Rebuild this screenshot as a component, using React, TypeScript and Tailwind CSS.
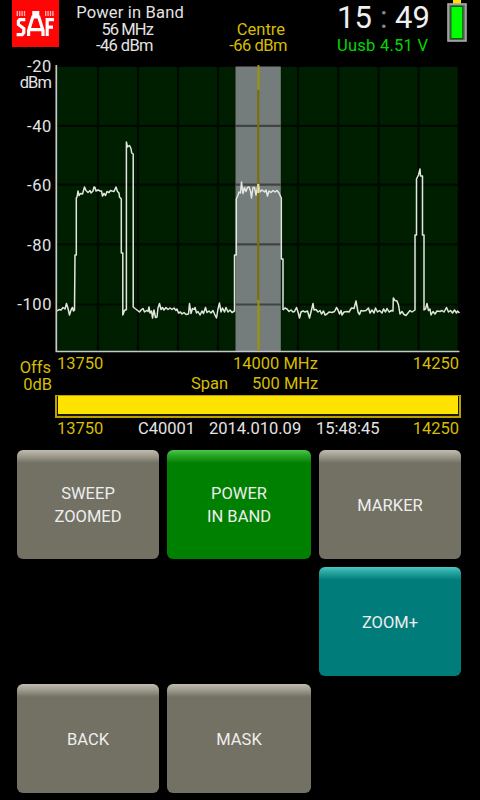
import clsx from "clsx";

const TRACE_LEFT =
  "57,311 59,309.5 61,310 63,307.5 65,309 66.5,303.5 68,308.5 69.5,315 71,310 72.5,307.5 73.5,311 74.5,310 75,255 76.3,255 76.3,198 77,197 78,191 79,195.5 80.5,193.5 82.5,194 84.5,187 86,190.5 88,192.5 90,190.5 91,193 93,191 94,187 95,187.5 96,191 98,190 100,191 101.5,191 102.5,196 104,193.5 105.5,195.5 107,191.5 109,192.5 110.5,190.5 112,191 114,191.5 116,187 117.5,191.5 119,193 119.5,197 121.3,199 121.3,253 122.8,253 122.8,315 124.5,310.5 126.4,309.5 126.4,142 127.5,147 129.5,145.5 131,148.5 131.7,153 133.2,154 133.2,307 135,308.5";

const TRACE_MIDDLE =
  "135,308.5 137,310 139.5,312 141.5,309.5 143,308.5 144.5,312 146.5,310.5 148,311.5 149,307 150,313 151.5,311 152.5,318 154,310 155.5,317.5 157,317 158,308 159.5,303.5 161,309.5 162.5,307.5 164,310 166,307.5 168,309.5 170,308 172,309.5 174,308 176,310.5 177,309 178.5,313 180.5,312 182,314 184,312.5 186,314.5 188.5,314 189.5,303.5 191,313.5 192.5,308.5 194,309.5 195,307.5 196.5,313 198,311.5 200,315 202,311 203.5,313.5 205.5,307.5 207,312.5 209,311 211,313 213,310.5 214.5,314 216.5,318 218,309 219.5,303 221,312 222.5,308 224.5,312 226,307.5 228,312 230,310 232,312.5 234.5,311 234.5,255 236.3,255 236.3,199 238,195 239,192 240.5,193 241.5,182 243,193.5 244.5,187.5 246,191.5 247.5,187.5 249,187 250.5,191 251.5,198 253,187.5 254.5,187.5 256,195 258.2,184 260,192 262,190 264.5,192 266,190 267.5,196 269,191 271,192.5 273,190.5 275,192 277,190.5 279,193 281.3,198 281.3,259 283,259 283,310";

const TRACE_RIGHT =
  "283,310 285,308 287,309 289,311.5 291,310 293,312 294.5,311.5 296.5,307.5 298,312 299.5,318 301,312 303,311 305,312 307.5,311 309.5,318 311.5,310 313,303.5 314,310 316,309.5 318,312 320,310.5 321.5,314 323.5,311 325,315 327,314 329,312 332,312.5 334.5,311.5 336.5,307.5 338,310 339.5,314 341,310.5 342,315 344,312 347,311.5 349,312 351.5,308 354,308.5 356,301 358,312 359.5,314.5 361,310.5 363,311 366,310.5 368.5,308 370,313 372,310 374,313 375.5,308 377.5,312 379.5,310.5 382,313 383.5,309 385.5,312 387,308.5 389,312 391.5,310.5 393,311 393.3,298 395,300.5 397,301 398.5,305 400,314 402,311.5 404,314.5 406,315.5 408,313 410,310.5 412,312 415,310 415,235 416.5,235 416.5,179 418.5,175 420,169 420.5,176 422.5,176 422.5,235 424,235 424,310 425.5,309 427,303.5 428.5,310.5 430,309 431,315 433,311.5 435,314 437,311 440,311.5 442,310.5 444,312 446.5,307.5 448.5,312 450.5,310.5 452.5,313 454.5,310 456.5,313 457.5,311 459.5,313";

const GRID_X = [98, 138, 178, 218, 298, 338.3, 378.7, 418.7];
const GRID_Y = [125.8, 184.6, 244.4, 304.5];

function Logo() {
  return (
    <svg className="h-[47px] w-[47px] shrink-0" viewBox="0 0 47 47" aria-label="SAF">
      <rect width="47" height="47" fill="#ff0505" />
      <g stroke="#fff" strokeWidth="1.3" strokeOpacity=".7">
        <path d="M5.3 11v5M7.7 11v5M10.1 11v5M12.5 11v5" />
        <path d="M33.7 11v5M36.1 11v5M38.5 11v5M40.9 11v5" />
      </g>
      <g fill="none" stroke="#fff" strokeWidth="3.2">
        <path d="M13.3 19.7H7.7L6.4 21.2v3.3l5.4 4v4.2l-1.6 1.9H4.6" />
        <path d="M16.6 36v-5.5l4.2-13.5h6L31 30.5V36M18 29.6h11.5" />
        <path d="M35.2 36V19.7h6.8M35 27.2h6" />
      </g>
      <path d="M20.3 11h7v6h-7z" fill="#fff" />
    </svg>
  );
}

function Battery() {
  return (
    <svg className="h-[42px] w-[20px] shrink-0" viewBox="447 0 20 42">
      <rect x="453" y="0" width="8" height="4" fill="#ffe000" />
      <rect x="448" y="4" width="18" height="37" fill="#737373" stroke="#aaa" strokeWidth="1.6" />
      <rect x="450.3" y="5.7" width="13.2" height="33.8" fill="#145a14" />
      <rect x="451.5" y="7" width="10.7" height="31" fill="#00ff00" />
    </svg>
  );
}

function Spectrum() {
  return (
    <svg className="h-[290px] w-[406px] shrink-0" viewBox="55 64 406 290">
      <rect x="57" y="67" width="400.7" height="284" fill="#001f00" />
      <g stroke="#000b00" strokeWidth="2.2">
        {GRID_X.map((x) => (
          <line key={x} x1={x} x2={x} y1="67" y2="351" />
        ))}
        {GRID_Y.map((y) => (
          <line key={y} x1="57" x2="457.7" y1={y} y2={y} />
        ))}
      </g>
      <rect x="235.5" y="66.5" width="45.3" height="284.5" fill="#747d7b" />
      <g stroke="#404443" strokeWidth="2.2">
        {GRID_Y.map((y) => (
          <line key={y} x1="236" x2="280.8" y1={y} y2={y} />
        ))}
      </g>
      <path d="M56.3 65V351.5H459.5" fill="none" stroke="#c8c8c8" strokeWidth="1.7" />
      <g fill="none" stroke="#e2e6df" strokeWidth="1.5" strokeLinejoin="round">
        <polyline points={TRACE_LEFT} />
        <polyline points={TRACE_MIDDLE} />
        <polyline points={TRACE_RIGHT} />
      </g>
      <path d="M258.2 90V300" stroke="#7b7008" strokeWidth="2.2" />
      <path d="M258.5 65V90M258.5 300V351" stroke="#9c9602" strokeWidth="2" />
      <path d="M258.2 184V193" stroke="#e6e2a0" strokeWidth="2" />
    </svg>
  );
}

interface KeyButtonProps {
  lines: string[];
  color?: "gray" | "green" | "teal";
  className?: string;
}

function KeyButton({ lines, color = "gray", className }: KeyButtonProps) {
  return (
    <button
      type="button"
      className={clsx(
        "flex h-[109px] flex-col items-center justify-center rounded-[6px] leading-[22.5px] text-[#eeeeee]",
        lines.length === 1 ? "pt-1" : "pt-[2px]",
        color === "gray" && "bg-[linear-gradient(#c0bcb0_0px,#a5a295_5px,#737164_13px)]",
        color === "green" && "bg-[linear-gradient(#48c848_0px,#2ba82b_5px,#008000_13px)]",
        color === "teal" && "bg-[linear-gradient(#48cac6_0px,#2ba6a2_5px,#007d7a_13px)]",
        className
      )}
    >
      {lines.map((line) => (
        <span key={line}>{line}</span>
      ))}
    </button>
  );
}

export default function App() {
  return (
    <main className="h-[800px] w-[480px] overflow-hidden bg-black font-['Roboto',sans-serif] text-[16.5px] leading-4 whitespace-nowrap text-[#e4e4e4]">
      <header className="flex h-[58px] items-start">
        <div className="w-[76px] shrink-0 pl-3">
          <Logo />
        </div>
        <div className="flex w-[108px] shrink-0 flex-col pt-[5px] leading-[16.5px]">
          <span className="self-end tracking-[0.18px]">Power in Band</span>
          <span className="self-end pr-[31px] tracking-[-0.9px]">56 MHz</span>
          <span className="self-end pr-[31px] tracking-[-0.6px]">-46 dBm</span>
        </div>
        <div className="flex w-[104px] shrink-0 flex-col items-end pt-[21.5px] pr-[1px] leading-[16.5px] text-[#d6bd00]">
          <span className="pr-[2px]">Centre</span>
          <span className="tracking-[-0.5px]">-66 dBm</span>
        </div>
        <div className="w-[159px] shrink-0 pl-[49px]">
          <div className="flex h-[36px] text-[31px] leading-[36px] text-[#f0f0f0]">
            <span className="w-[43px]">15</span>
            <span className="w-[15px] text-[#888888]">:</span>
            <span>49</span>
          </div>
          <div className="leading-[19px] tracking-[0.25px] text-[#00d900]">Uusb 4.51 V</div>
        </div>
        <Battery />
      </header>

      <section className="flex h-[296px]">
        <div className="flex w-[55px] shrink-0 flex-col items-end pt-px pr-[3px]">
          <span className="tracking-[0.6px]">-20</span>
          <span className="pr-px tracking-[-0.9px]">dBm</span>
          <div className="flex flex-col items-end gap-[43.6px] pt-[27.5px] tracking-[0.6px]">
            <span>-40</span>
            <span>-60</span>
            <span>-80</span>
            <span>-100</span>
          </div>
        </div>
        <div className="pt-[6px]">
          <Spectrum />
        </div>
      </section>

      <section className="flex h-[96px] text-[#d6bd00]">
        <div className="flex w-[55px] shrink-0 flex-col items-end pt-[6px] pr-[3px] leading-[16.5px]">
          <span className="pr-px">Offs</span>
          <span>0dB</span>
        </div>
        <div className="w-[406px]">
          <div className="flex h-[20px] items-center pb-px">
            <span className="w-[178px] pl-[2px]">13750</span>
            <span className="w-[87px]">14000 MHz</span>
            <span className="grow pr-[2px] text-right">14250</span>
          </div>
          <div className="flex h-[20px] items-center">
            <span className="w-[197px] pl-[136px]">Span</span>
            <span>500 MHz</span>
          </div>
          <div className="mt-px h-[23px] border-2 border-t border-[#b9a000] bg-[#1c1800] px-px pb-[2px]">
            <div className="h-full bg-[#ffe300]" />
          </div>
          <div className="flex h-[20px] items-center pt-px">
            <span className="w-[83px] pl-[2px]">13750</span>
            <span className="w-[71px] text-[#e4e4e4]">C40001</span>
            <span className="w-[107px] text-[#e4e4e4]">2014.010.09</span>
            <span className="text-[#e4e4e4]">15:48:45</span>
            <span className="grow pr-[2px] text-right">14250</span>
          </div>
        </div>
      </section>

      <section className="grid grid-cols-[142px_144px_142px] gap-2 pl-[17px]">
        <KeyButton lines={["SWEEP", "ZOOMED"]} />
        <KeyButton lines={["POWER", "IN BAND"]} color="green" />
        <KeyButton lines={["MARKER"]} />
        <KeyButton lines={["ZOOM+"]} color="teal" className="col-start-3" />
        <KeyButton lines={["BACK"]} />
        <KeyButton lines={["MASK"]} />
      </section>
    </main>
  );
}
